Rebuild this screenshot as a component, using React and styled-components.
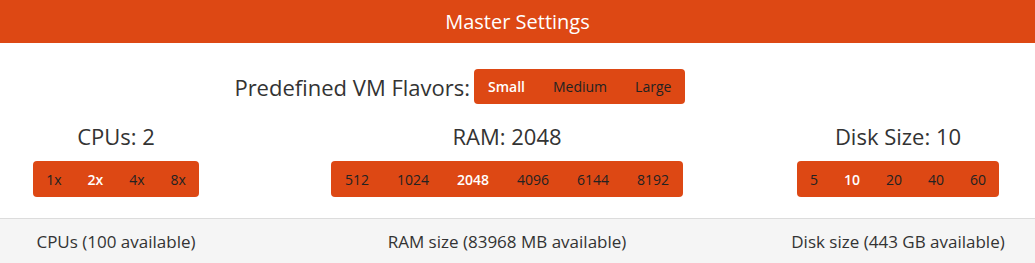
import React, { useState } from 'react'
import styled, { createGlobalStyle } from 'styled-components'

const GlobalStyle = createGlobalStyle`
    html, body {
        margin: 0;
        padding: 0;
        background: #fff;
        font-family: "Open Sans", "Noto Sans", sans-serif;
        color: #333;
    }
`;

const Panel = styled.div`
    width: 1035px;
    height: 263px;
    display: flex;
    flex-direction: column;
    overflow: hidden;
`;

const Header = styled.div`
    height: 43px;
    background: #dd4814;
    color: #fff;
    display: flex;
    align-items: center;
    justify-content: center;
    font-size: 20px;
    font-weight: 500;
`;

const Body = styled.div`
    flex: 1;
    padding-top: 26px;
`;

const FlavorRow = styled.div`
    display: grid;
    grid-template-columns: 474px auto;
    align-items: center;
`;

const FlavorLabel = styled.div`
    justify-self: end;
    padding-right: 4px;
    font-size: 22px;
`;

const Columns = styled.div`
    display: flex;
    gap: 159px;
    margin-top: 18px;
`;

const Column = styled.div`
    flex: 0 0 232px;
    min-width: 0;
    display: flex;
    flex-direction: column;
    align-items: center;
`;

const Heading = styled.div`
    font-size: 22px;
    line-height: 28px;
    white-space: nowrap;
    margin-bottom: 11px;
`;

const Group = styled.div`
    display: flex;
    justify-self: start;
    width: max-content;
    flex-shrink: 0;
    background: #dd4814;
    border-radius: 4px;
    height: ${props => props.h || 36}px;
    white-space: nowrap;
`;

const Option = styled.button`
    border: none;
    background: transparent;
    font-family: inherit;
    font-size: 14px;
    padding: 0 ${props => props.pad || 14}px;
    color: ${props => props.active ? '#fff' : '#222'};
    font-weight: ${props => props.active ? 600 : 400};
    cursor: pointer;
`;

const Footer = styled.div`
    height: 44px;
    border-top: 1px solid #dcdcdc;
    background: #f5f5f5;
    display: flex;
    gap: 159px;
    align-items: center;
`;

const FooterCell = styled.div`
    flex: 0 0 232px;
    min-width: 0;
    display: flex;
    justify-content: center;
    white-space: nowrap;
    font-size: 17px;
    color: #333;
`;

function Selector({ options, value, onChange, pad, h }) {
    return (
        <Group h={h}>
            {options.map(o => (
                <Option key={o} pad={pad} active={o === value} onClick={() => onChange(o)}>
                    {o}
                </Option>
            ))}
        </Group>
    );
}

export default function App() {
    const [flavor, setFlavor] = useState('Small');
    const [cpu, setCpu] = useState('2x');
    const [ram, setRam] = useState('2048');
    const [disk, setDisk] = useState('10');

    return (
        <Panel>
            <GlobalStyle />
            <Header>Master Settings</Header>
            <Body>
                <FlavorRow>
                    <FlavorLabel>Predefined VM Flavors:</FlavorLabel>
                    <Selector options={['Small', 'Medium', 'Large']} value={flavor} onChange={setFlavor} h={35} />
                </FlavorRow>
                <Columns>
                    <Column>
                        <Heading>CPUs: {cpu.replace('x', '')}</Heading>
                        <Selector options={['1x', '2x', '4x', '8x']} value={cpu} onChange={setCpu} pad={13} />
                    </Column>
                    <Column>
                        <Heading>RAM: {ram}</Heading>
                        <Selector options={['512', '1024', '2048', '4096', '6144', '8192']} value={ram} onChange={setRam} />
                    </Column>
                    <Column>
                        <Heading>Disk Size: {disk}</Heading>
                        <Selector options={['5', '10', '20', '40', '60']} value={disk} onChange={setDisk} pad={13} />
                    </Column>
                </Columns>
            </Body>
            <Footer>
                <FooterCell>CPUs (100 available)</FooterCell>
                <FooterCell>RAM size (83968 MB available)</FooterCell>
                <FooterCell>Disk size (443 GB available)</FooterCell>
            </Footer>
        </Panel>
    );
}
